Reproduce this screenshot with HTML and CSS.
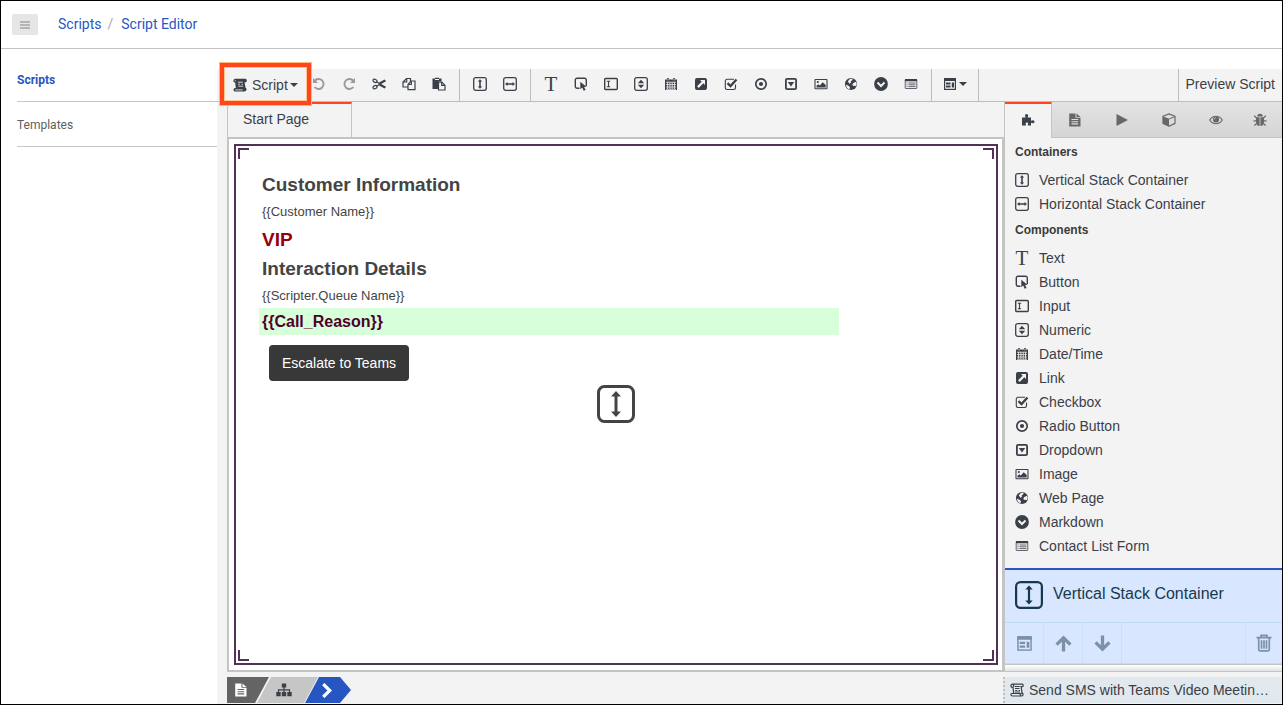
FILE: index.html
```html
<!DOCTYPE html>
<html lang="en">
<head>
<meta charset="utf-8">
<title>Script Editor</title>
<link rel="stylesheet" href="styles.css">
</head>
<body>
<svg class="sprite" aria-hidden="true">
  <symbol id="i-scroll" viewBox="0 0 14 14"><path fill="currentColor" d="M2.300.8H12.200c2.200.2 2.200 3.400 0 3.600h-.6l1 5.600h.4c1.300 1.200.3 3.600-1.600 3.600H2.300C0 13.600 0 10 2.200 9.900h.6L2.200 4.600C-.2 4.200-.2 1 2.300.8z"/><path stroke="#f3f3f3" stroke-width=".8" fill="none" d="M1.800 2.700h1M4.800 4.200h5M5 6.200h2M8.500 6.200H10M5.200 8.200h5M2.200 11.900h7.500"/></symbol>
  <symbol id="i-scroll-o" viewBox="0 0 14 14"><g fill="none" stroke="currentColor" stroke-width="1.200"><path d="M3 4.500C.3 4.500.3 1.200 2.500 1.200H12c1.600 0 1.600 2.500 0 2.500h-.9l1 6.500M3 4.200l.7 6M2.500 1.200c1.200 0 1.500 1.500.8 2.800M2 10.500h8.300c-.3 1.500.3 2.500 1.200 2.500H2.500C.5 13 .5 10.500 2 10.500zM11 10.300h1.500c1 .8.500 2.700-1 2.700"/><path d="M4.800 3.500h5M5 5.500h4.500M5.200 7.500h2M8.500 7.500h1.500M5 9h5"/></g></symbol>
  <symbol id="i-undo" viewBox="0 0 14 14"><path fill="none" stroke="currentColor" stroke-width="1.900" d="M2.700 3.800A5 5 0 1 1 2.600 10"/><path fill="currentColor" d="M1 1v5h5z"/></symbol>
  <symbol id="i-redo" viewBox="0 0 14 14"><path fill="none" stroke="currentColor" stroke-width="1.900" d="M11.300 3.800A5 5 0 1 0 11.400 10"/><path fill="currentColor" d="M13 1v5H8z"/></symbol>
  <symbol id="i-cut" viewBox="0 0 14 14"><g fill="none" stroke="currentColor"><ellipse cx="3" cy="3.800" rx="2.100" ry="1.500" stroke-width="1.200" transform="rotate(25 3 3.800)"/><ellipse cx="3" cy="10.200" rx="2.100" ry="1.500" stroke-width="1.200" transform="rotate(-25 3 10.200)"/><path stroke-width="1.100" d="M4.700 4.800 7 6.300 12.500 3.200l.8.800L8 7l5.300 3-.8.800L7 7.700 4.700 9.200"/></g></symbol>
  <symbol id="i-copy" viewBox="0 0 14 14"><path fill="none" stroke="currentColor" stroke-width="1.200" d="M6 10H1V5l3.500-3.500H8.500V4M4.700 1.500V5H1M6 7.500 9 4h4v8.700H6zM9.300 4v3.500H6"/></symbol>
  <symbol id="i-paste" viewBox="0 0 14 14"><path fill="currentColor" d="M.5 1.500h2.500V.7h4v.8h2.500v3H6v7.500H.5z"/><path fill="none" stroke="#f3f3f3" d="M3 2.500h4"/><path fill="#f3f3f3" stroke="currentColor" stroke-width="1.200" d="M6.500 5.200h3.300l3.200 3.200v4.600H6.500z"/><path fill="none" stroke="currentColor" stroke-width="1.200" d="M9.700 5.200v3.200H13"/></symbol>
  <symbol id="i-vstack" viewBox="0 0 14 14"><rect x=".7" y=".7" width="12.600" height="12.600" rx="2" fill="none" stroke="currentColor" stroke-width="1.300"/><path fill="currentColor" d="M7 2.200 9.200 4.500H7.800v5h1.400L7 11.800 4.800 9.500h1.400v-5H4.800z"/></symbol>
  <symbol id="i-vstack-lg" viewBox="0 0 38 38"><rect x="1.500" y="1.500" width="35" height="35" rx="6" fill="none" stroke="currentColor" stroke-width="3"/><path stroke="currentColor" stroke-width="3" d="M19 10v18"/><path fill="currentColor" d="M19 6l5 5.500H14zM19 32l-5-5.500h10z"/></symbol>
  <symbol id="i-hstack" viewBox="0 0 14 14"><rect x=".7" y=".7" width="12.600" height="12.600" rx="2" fill="none" stroke="currentColor" stroke-width="1.300"/><path fill="currentColor" d="M2 7 4.500 4.900v1.400h5V4.900L12 7 9.500 9.100V7.700h-5v1.400z"/></symbol>
  <symbol id="i-button" viewBox="0 0 14 14"><path fill="none" stroke="currentColor" stroke-width="1.400" d="M5.500 11.200H3a1.700 1.700 0 0 1-1.700-1.700V2.900A1.700 1.700 0 0 1 3 1.200h7.600a1.700 1.700 0 0 1 1.700 1.700V9"/><path fill="currentColor" d="M6.300 4.800v7.400l1.900-1.600 1.500 3.200 1.900-.9-1.500-3h2.600z"/></symbol>
  <symbol id="i-input" viewBox="0 0 14 14"><rect x=".7" y="1.500" width="12.600" height="11" rx="1" fill="none" stroke="currentColor" stroke-width="1.400"/><path fill="none" stroke="currentColor" stroke-width="1.100" d="M2.800 4.300h3.400M2.800 9.700h3.400M4.500 4.300v5.400"/></symbol>
  <symbol id="i-numeric" viewBox="0 0 14 14"><rect x=".7" y=".7" width="12.600" height="12.600" rx="2" fill="none" stroke="currentColor" stroke-width="1.300"/><path fill="currentColor" d="M7 2.800l3.200 3.400H3.800zM7 11.200 3.800 7.800h6.400z"/></symbol>
  <symbol id="i-date" viewBox="0 0 14 14"><path fill="currentColor" d="M1 2.500h2V1h2v1.500h4V1h2v1.500h2V13H1z"/><path stroke="#f3f3f3" stroke-width=".8" fill="none" d="M2 5.200h10M2 7.600h10M2 10h10M2 12.300h10M3.600 5v7M5.900 5v7M8.200 5v7M10.500 5v7M4 1.500v2M10 1.500v2"/></symbol>
  <symbol id="i-link" viewBox="0 0 14 14"><rect x="1" y="1" width="12" height="12" rx="2" fill="currentColor"/><path fill="#f3f3f3" d="M11 3v5L9.300 6.300l-4.600 4.600-1.600-1.600 4.600-4.600L6 3z"/></symbol>
  <symbol id="i-check" viewBox="0 0 14 14"><path fill="none" stroke="currentColor" stroke-width="1.100" d="M11.500 7.500v3.300a1.700 1.700 0 0 1-1.700 1.700H3a1.700 1.700 0 0 1-1.700-1.700V4A1.700 1.700 0 0 1 3 2.300h7"/><path fill="none" stroke="currentColor" stroke-width="2.300" d="M3.500 6.200 6.500 9l6-6.500"/></symbol>
  <symbol id="i-radio" viewBox="0 0 14 14"><circle cx="7" cy="7" r="5.200" fill="none" stroke="currentColor" stroke-width="1.700"/><circle cx="7" cy="7" r="2.100" fill="currentColor"/></symbol>
  <symbol id="i-drop" viewBox="0 0 14 14"><rect x="1.900" y="1.900" width="10.200" height="10.200" rx="1.200" fill="none" stroke="currentColor" stroke-width="1.800"/><path fill="currentColor" d="M3.800 5h6.400L7 9.500z"/></symbol>
  <symbol id="i-image" viewBox="0 0 14 14"><rect x="1" y="2.500" width="12" height="9.200" rx=".5" fill="none" stroke="currentColor" stroke-width="1.100"/><circle cx="3.800" cy="5" r="1.100" fill="currentColor"/><path fill="currentColor" d="M2.500 10.500V8.800l1.800-1.600 1.500 1.300 2.900-3.300 3 2.900v2.400z"/></symbol>
  <symbol id="i-globe" viewBox="0 0 14 14"><circle cx="7" cy="7" r="6.100" fill="currentColor"/><path fill="#f3f3f3" d="M6.300 1.700l2.500.1L8 3.500 6.700 4.300 7 5.500 5.500 7 4.800 5.500l-1-.6.800-1.600zM9 6.300l2.700-1.500 1 1.500-.5 3-1.500-.6L9.500 9 8.300 8zM1.700 7.500l2.800 1.300L6 10.300 5.300 12.500 3 11z"/></symbol>
  <symbol id="i-md" viewBox="0 0 14 14"><circle cx="7" cy="7" r="6.900" fill="currentColor"/><path fill="none" stroke="#f3f3f3" stroke-width="2" d="M3.500 5.500 7 9l3.500-3.500"/></symbol>
  <symbol id="i-form" viewBox="0 0 14 14"><rect x="1.200" y="2.500" width="11.600" height="9" rx=".5" fill="none" stroke="currentColor" stroke-width=".8"/><path fill="currentColor" d="M1 2h12v2.300H1z"/><path stroke="currentColor" stroke-width=".8" d="M2.500 6h1M4.500 6h7M2.500 7.800h1M4.500 7.800h7M2.500 9.600h1M4.500 9.600h7"/></symbol>
  <symbol id="i-layout" viewBox="0 0 14 14"><rect x="1.600" y="1.600" width="10.800" height="10.800" fill="none" stroke="currentColor" stroke-width="1.200"/><path fill="currentColor" d="M1 1h12v3H1zM3 5.500h4.500v2H3zM3 8.600h4.500v2H3zM8.800 5.500h2.200v5.100H8.800z"/></symbol>
  <symbol id="i-puzzle" viewBox="0 0 14 14"><path fill="currentColor" d="M1 4.500h3.500c.4-.5-.5-1-.5-2a1.600 1.600 0 0 1 3.200 0c0 1-.8 1.500-.4 2H10v3c.5.600 1-.3 2-.3a1.500 1.500 0 0 1 0 3c-1 0-1.500-.9-2-.3v2.600H7c-.8-.5.200-1 .2-1.700a1.300 1.300 0 0 0-2.600 0c0 .7 1 1.200.2 1.700H1z"/></symbol>
  <symbol id="i-doc" viewBox="0 0 14 14"><path fill="currentColor" d="M1.200.5h6.300v4.300h5v8.700H1.200zM8.500.5l4 3.500h-4z"/><path stroke="var(--paper, #dedede)" stroke-width="1.100" d="M3.500 6.500h6.700M3.500 8.700h6.700M3.500 10.900h6.700"/></symbol>
  <symbol id="i-play" viewBox="0 0 14 14"><path fill="currentColor" d="M1.500 1 13 7 1.500 13z"/></symbol>
  <symbol id="i-cube" viewBox="0 0 14 14"><path fill="none" stroke="currentColor" stroke-width="1.200" stroke-linejoin="round" d="M7 .9l6 2.300v7.200l-6 2.900-6-2.900V3.200z"/><path fill="currentColor" d="M.8 3.200 7 5.700v7.500L1 10.500zM7 5.600l6-2.600v1L7 6.500z"/></symbol>
  <symbol id="i-eye" viewBox="0 0 14 14"><path fill="none" stroke="currentColor" stroke-width="1.100" d="M.7 7C3.800 1.900 10.200 1.900 13.300 7 10.200 12 3.800 12 .7 7z"/><circle cx="7" cy="6.500" r="3.100" fill="currentColor"/><path fill="none" stroke="#ddd" stroke-width=".7" d="M5.200 6.500c0-1 .7-1.800 1.800-1.800"/></symbol>
  <symbol id="i-bug" viewBox="0 0 14 14"><path fill="currentColor" d="M4.200 3.500a2.800 2.800 0 0 1 5.600 0zM3 4.200h3.600V13C4 13 3 11 3 9zM7.400 4.200H11V9c0 2-1 4-3.600 4z"/><path fill="none" stroke="currentColor" stroke-width="1.200" d="M3.500 5 1.200 2.800M10.500 5l2.300-2.200M3 7.800H.5M11 7.800h2.500M3.500 10.500l-2.200 2.200M10.500 10.500l2.200 2.200"/></symbol>
  <symbol id="i-up" viewBox="0 0 14 14"><path fill="none" stroke="currentColor" stroke-width="2.700" d="M7 13.500V2M1.300 8 7 2.300 12.700 8"/></symbol>
  <symbol id="i-down" viewBox="0 0 14 14"><path fill="none" stroke="currentColor" stroke-width="2.700" d="M7 .5V12M1.300 6 7 11.700 12.700 6"/></symbol>
  <symbol id="i-trash" viewBox="0 0 14 16"><path fill="none" stroke="currentColor" stroke-width="1.500" d="M.3 3.200h13.400M4.400 3V1.200h5.200V3M2.300 3.500v10.200q0 1.300 1.300 1.300h6.800q1.300 0 1.300-1.300V3.500M4.800 5.500V13M7 5.500V13M9.200 5.500V13"/></symbol>
  <symbol id="i-tree" viewBox="0 0 16 14"><path fill="none" stroke="currentColor" stroke-width="1.200" d="M8 4v6M2.500 10V6.800h11V10"/><path fill="currentColor" d="M5.800.5h4.400v4H5.800zM.3 9h4.400v4.300H.3zM5.800 9h4.400v4.300H5.800zM11.300 9h4.400v4.300h-4.400z"/></symbol>
  <symbol id="i-chev" viewBox="0 0 14 14"><path fill="none" stroke="currentColor" stroke-width="3" d="M4 1 10 7l-6 6"/></symbol>
  <symbol id="i-caret" viewBox="0 0 8 4"><path fill="currentColor" d="M0 0h8L4 4z"/></symbol>
  <symbol id="i-menu" viewBox="0 0 10 8"><path stroke="currentColor" stroke-width="1.300" d="M0 1h10M0 4h10M0 7h10"/></symbol>
</svg>

<div class="app">
  <header class="header">
    <button class="menu-btn" aria-label="Menu"><svg class="menu-icon"><use href="#i-menu"/></svg></button>
    <nav class="crumbs"><a href="#">Scripts</a><span class="slash">/</span><a href="#">Script Editor</a></nav>
  </header>

  <div class="body">
    <nav class="sidebar">
      <a class="side-link current" href="#">Scripts</a>
      <a class="side-link" href="#">Templates</a>
    </nav>

    <main class="editor">
      <div class="toolbar">
        <div class="group first">
          <button class="script-btn"><svg class="icon"><use href="#i-scroll"/></svg><span>Script</span><svg class="caret"><use href="#i-caret"/></svg></button>
          <button class="tool dim" aria-label="Undo"><svg class="icon"><use href="#i-undo"/></svg></button>
          <button class="tool dim" aria-label="Redo"><svg class="icon"><use href="#i-redo"/></svg></button>
          <button class="tool" aria-label="Cut"><svg class="icon"><use href="#i-cut"/></svg></button>
          <button class="tool" aria-label="Copy"><svg class="icon"><use href="#i-copy"/></svg></button>
          <button class="tool" aria-label="Paste"><svg class="icon"><use href="#i-paste"/></svg></button>
        </div>
        <div class="group">
          <button class="tool" aria-label="Vertical stack"><svg class="icon"><use href="#i-vstack"/></svg></button>
          <button class="tool" aria-label="Horizontal stack"><svg class="icon"><use href="#i-hstack"/></svg></button>
        </div>
        <div class="group">
          <button class="tool" aria-label="Add text"><span class="letter">T</span></button>
          <button class="tool" aria-label="Add button"><svg class="icon"><use href="#i-button"/></svg></button>
          <button class="tool" aria-label="Add input"><svg class="icon"><use href="#i-input"/></svg></button>
          <button class="tool" aria-label="Add numeric"><svg class="icon"><use href="#i-numeric"/></svg></button>
          <button class="tool" aria-label="Add date"><svg class="icon"><use href="#i-date"/></svg></button>
          <button class="tool" aria-label="Add link"><svg class="icon"><use href="#i-link"/></svg></button>
          <button class="tool" aria-label="Add checkbox"><svg class="icon"><use href="#i-check"/></svg></button>
          <button class="tool" aria-label="Add radio button"><svg class="icon"><use href="#i-radio"/></svg></button>
          <button class="tool" aria-label="Add dropdown"><svg class="icon"><use href="#i-drop"/></svg></button>
          <button class="tool" aria-label="Add image"><svg class="icon"><use href="#i-image"/></svg></button>
          <button class="tool" aria-label="Add web page"><svg class="icon"><use href="#i-globe"/></svg></button>
          <button class="tool" aria-label="Add markdown"><svg class="icon"><use href="#i-md"/></svg></button>
          <button class="tool" aria-label="Add contact list form"><svg class="icon"><use href="#i-form"/></svg></button>
        </div>
        <div class="group">
          <button class="tool wide" aria-label="Layout"><svg class="icon"><use href="#i-layout"/></svg><svg class="caret"><use href="#i-caret"/></svg></button>
        </div>
        <button class="preview">Preview Script</button>
      </div>

      <div class="work">
        <section class="stage">
          <div class="page-tabs"><button class="page-tab">Start Page</button></div>
          <div class="canvas">
            <div class="frame">
              <i class="corner tl"></i><i class="corner tr"></i><i class="corner bl"></i><i class="corner br"></i>
              <svg class="drop-mark"><use href="#i-vstack-lg"/></svg>
              <h2 class="title">Customer Information</h2>
              <p class="field">{{Customer Name}}</p>
              <p class="title vip">VIP</p>
              <h2 class="title">Interaction Details</h2>
              <p class="field">{{Scripter.Queue Name}}</p>
              <p class="reason">{{Call_Reason}}</p>
              <button class="escalate">Escalate to Teams</button>
            </div>
          </div>
        </section>

        <aside class="panel">
          <div class="tabs">
            <button class="tab active" aria-label="Components"><svg class="icon"><use href="#i-puzzle"/></svg></button>
            <button class="tab" aria-label="Pages"><svg class="icon"><use href="#i-doc"/></svg></button>
            <button class="tab" aria-label="Actions"><svg class="icon"><use href="#i-play"/></svg></button>
            <button class="tab" aria-label="Variables"><svg class="icon"><use href="#i-cube"/></svg></button>
            <button class="tab" aria-label="View"><svg class="icon"><use href="#i-eye"/></svg></button>
            <button class="tab" aria-label="Debug"><svg class="icon"><use href="#i-bug"/></svg></button>
          </div>
          <div class="library">
            <h3 class="lib-title">Containers</h3>
            <button class="item"><svg class="icon"><use href="#i-vstack"/></svg>Vertical Stack Container</button>
            <button class="item"><svg class="icon"><use href="#i-hstack"/></svg>Horizontal Stack Container</button>
            <h3 class="lib-title">Components</h3>
            <button class="item"><span class="letter">T</span>Text</button>
            <button class="item"><svg class="icon"><use href="#i-button"/></svg>Button</button>
            <button class="item"><svg class="icon"><use href="#i-input"/></svg>Input</button>
            <button class="item"><svg class="icon"><use href="#i-numeric"/></svg>Numeric</button>
            <button class="item"><svg class="icon"><use href="#i-date"/></svg>Date/Time</button>
            <button class="item"><svg class="icon"><use href="#i-link"/></svg>Link</button>
            <button class="item"><svg class="icon"><use href="#i-check"/></svg>Checkbox</button>
            <button class="item"><svg class="icon"><use href="#i-radio"/></svg>Radio Button</button>
            <button class="item"><svg class="icon"><use href="#i-drop"/></svg>Dropdown</button>
            <button class="item"><svg class="icon"><use href="#i-image"/></svg>Image</button>
            <button class="item"><svg class="icon"><use href="#i-globe"/></svg>Web Page</button>
            <button class="item"><svg class="icon"><use href="#i-md"/></svg>Markdown</button>
            <button class="item"><svg class="icon"><use href="#i-form"/></svg>Contact List Form</button>
          </div>
          <div class="selected">
            <div class="sel-head"><svg class="sel-icon"><use href="#i-vstack-lg"/></svg>Vertical Stack Container</div>
            <div class="sel-tools">
              <button class="sel-tool" aria-label="Layout"><svg class="sel-glyph"><use href="#i-layout"/></svg></button>
              <button class="sel-tool" aria-label="Move up"><svg class="sel-glyph"><use href="#i-up"/></svg></button>
              <button class="sel-tool" aria-label="Move down"><svg class="sel-glyph"><use href="#i-down"/></svg></button>
              <button class="sel-tool last" aria-label="Delete"><svg class="sel-glyph trash"><use href="#i-trash"/></svg></button>
            </div>
          </div>
          <div class="ledge"></div>
        </aside>
      </div>

      <footer class="footer">
        <div class="path">
          <button class="step page" aria-label="Page"><svg class="icon"><use href="#i-doc"/></svg></button>
          <button class="step tree" aria-label="Tree"><svg class="tree-icon"><use href="#i-tree"/></svg></button>
          <button class="step next" aria-label="Next"><svg class="chev"><use href="#i-chev"/></svg></button>
        </div>
        <div class="script-name"><svg class="icon"><use href="#i-scroll-o"/></svg><span>Send SMS with Teams Video Meetin…</span></div>
      </footer>
      <div class="highlight"></div>
    </main>
  </div>
</div>
</body>
</html>
```
FILE: styles.css
```css
* { box-sizing: border-box; }
body { margin: 0; background: #fff; font-family: "Liberation Sans", Arial, sans-serif; font-size: 14px; color: #3b4048; }
button { margin: 0; padding: 0; border: 0; background: none; font: inherit; color: inherit; }
a { text-decoration: none; }
h2, h3, p { margin: 0; }
svg { display: block; flex: none; }
.sprite { position: absolute; width: 0; height: 0; }
.icon { width: 14px; height: 14px; }
.caret { width: 8px; height: 4px; }
.letter { width: 14px; flex: none; text-align: center; font-family: "Liberation Serif", serif; font-size: 21px; line-height: 24px; }

.app { height: 100vh; min-height: 640px; display: flex; flex-direction: column; border: 1px solid #000; }
.header { display: flex; align-items: center; gap: 20px; height: 48px; flex: none; padding: 0 11px; border-bottom: 1px solid #c1c1c1; font-family: Roboto, sans-serif; }
.menu-btn { width: 26px; height: 21px; display: grid; place-items: center; border-radius: 2px; background: #e6e6e6; color: #a5a5a5; }
.menu-icon { width: 10px; height: 8px; }
.crumbs { display: flex; gap: 6px; padding-bottom: 2px; line-height: 20px; }
.crumbs a { color: #2856c4; }
.slash { padding-right: 2px; color: #aaa; }

.body { flex: 1; min-height: 0; display: flex; }
.sidebar { width: 216px; flex: none; padding: 8px 0 0 16px; font-family: Roboto, sans-serif; font-size: 12px; }
.side-link { display: block; height: 45px; line-height: 46px; border-bottom: 1px solid #c8c8c8; color: #5e5e5e; }
.side-link.current { font-weight: 700; color: #2856c4; }

.editor { position: relative; flex: 1; min-width: 0; margin-top: 20px; display: flex; flex-direction: column; background: #f3f3f3; }
.toolbar { display: flex; flex: none; height: 33px; border-bottom: 1px solid #bdbdbd; }
.group { display: flex; padding: 0 5px; border-right: 1px solid #bdbdbd; }
.group.first { padding-left: 0; }
.tool { width: 30px; padding-bottom: 2px; display: flex; align-items: center; justify-content: center; gap: 2px; }
.tool.dim { color: #999; }
.tool.wide { width: 36px; }
.script-btn { width: 87px; padding-left: 16px; display: flex; align-items: center; gap: 2px; }
.script-btn span { padding-left: 3px; }
.preview { margin-left: auto; padding: 0 7px 2px; border-left: 1px solid #bdbdbd; }
.highlight { position: absolute; left: 2px; top: -7px; width: 93px; height: 44px; border: 5px solid #ff451a; outline: 1px solid #ffb877; outline-offset: -1px; box-shadow: inset 0 0 0 1px #ffc68f; }

.work { flex: 1; min-height: 0; display: flex; }
.stage { flex: 1; min-width: 0; padding-left: 10px; display: flex; flex-direction: column; }
.page-tabs { height: 35px; flex: none; border-left: 1px solid #c4c4c4; }
.page-tab { width: 124px; height: 35px; padding: 0 0 4px 15px; text-align: left; border-top: 2px solid #ff451a; border-right: 1px solid #c4c4c4; }
.canvas { flex: 1; min-height: 0; display: flex; padding: 5px 4px 5px 5px; border: 2px solid #c4c4c4; background: #fff; }
.frame { position: relative; flex: 1; padding: 25px 23px; border: 2px solid #523254; }
.corner { position: absolute; width: 11px; height: 11px; border: 0 solid #523254; }
.tl { left: 2px; top: 2px; border-width: 2px 0 0 2px; }
.tr { right: 2px; top: 2px; border-width: 2px 2px 0 0; }
.bl { left: 2px; bottom: 2px; border-width: 0 0 2px 2px; }
.br { right: 2px; bottom: 2px; border-width: 0 2px 2px 0; }
.drop-mark { position: absolute; inset: 0 0 2px; margin: auto; width: 38px; height: 38px; color: #444; }
.title { padding-left: 3px; font-size: 19px; font-weight: 700; line-height: 28px; color: #444; }
.title.vip { line-height: 31px; color: #96000c; }
.field { padding-left: 3px; font-size: 13px; line-height: 25px; color: #444; }
.reason { max-width: 580px; padding-left: 3px; font-size: 16px; font-weight: 700; line-height: 27px; color: #50002d; background: #d7ffd9; }
.escalate { margin: 10px 0 0 10px; width: 140px; height: 36px; border-radius: 4px; background: #383838; color: #fff; }

.panel { width: 278px; flex: none; display: flex; flex-direction: column; border-left: 1px solid #c4c4c4; }
.tabs { display: flex; flex: none; height: 36px; color: #686868; }
.tab { width: 47px; padding-right: 2px; display: grid; place-items: center; border-bottom: 1px solid #c4c4c4; background: linear-gradient(#e3e3e3, #d5d5d5); }
.tab:last-child { flex: 1; }
.tab.active { padding: 0 0 2px; border-top: 2px solid #ff451a; border-right: 1px solid #c4c4c4; border-bottom: 0; background: #f3f3f3; color: #3b4048; }
.library { flex: 1; min-height: 0; overflow: hidden; padding-left: 10px; }
.lib-title { height: 30px; font-size: 12px; line-height: 28px; color: #3b3b3b; }
.item { width: 100%; height: 24px; display: flex; align-items: center; gap: 10px; text-align: left; }
.selected { flex: none; border-top: 2px solid #2856c4; background: #d8e6ff; color: #173a4b; }
.sel-head { display: flex; align-items: center; gap: 10px; height: 52px; padding: 0 10px 4px; font-size: 16px; }
.sel-icon { width: 28px; height: 28px; margin-top: 2px; }
.sel-tools { display: flex; height: 42px; border: 1px solid #bfdcf4; border-width: 1px 0; color: #7b92a5; }
.sel-tool { width: 39px; display: grid; place-items: center; border-right: 1px solid #c9e1f8; }
.sel-tool.last { margin-left: auto; width: 37px; border-right: 0; border-left: 1px solid #c9e1f8; }
.sel-glyph { width: 17px; height: 17px; }
.trash { width: 16px; height: 18px; }
.ledge { height: 8px; flex: none; border: 1px solid #c4c4c4; border-width: 1px 0; background: linear-gradient(#fff, #e3e3e3); }

.footer { display: flex; justify-content: space-between; flex: none; height: 32px; padding: 5px 0 1px 10px; }
.path { display: flex; }
.step { height: 26px; display: flex; align-items: center; }
.step.page { --paper: #666; width: 42px; padding-left: 7px; background: #646464; color: #fff; clip-path: polygon(0 0, 100% 0, calc(100% - 14px) 100%, 0 100%); }
.step.tree { width: 61px; margin-left: -12px; padding-left: 19px; background: #c6c6c6; clip-path: polygon(14px 0, 100% 0, calc(100% - 14px) 100%, 0 100%); }
.tree-icon { width: 16px; height: 14px; }
.step.next { width: 46px; margin-left: -13px; padding-left: 14px; background: #2756c3; color: #fff; clip-path: polygon(14px 0, 35px 0, 100% 50%, 35px 100%, 0 100%); }
.chev { width: 15px; height: 15px; }
.script-name { width: 279px; display: flex; align-items: center; gap: 5px; padding-left: 5px; border-left: 2px dotted #c0c0c0; background: #e1e9ee; white-space: nowrap; }
```
